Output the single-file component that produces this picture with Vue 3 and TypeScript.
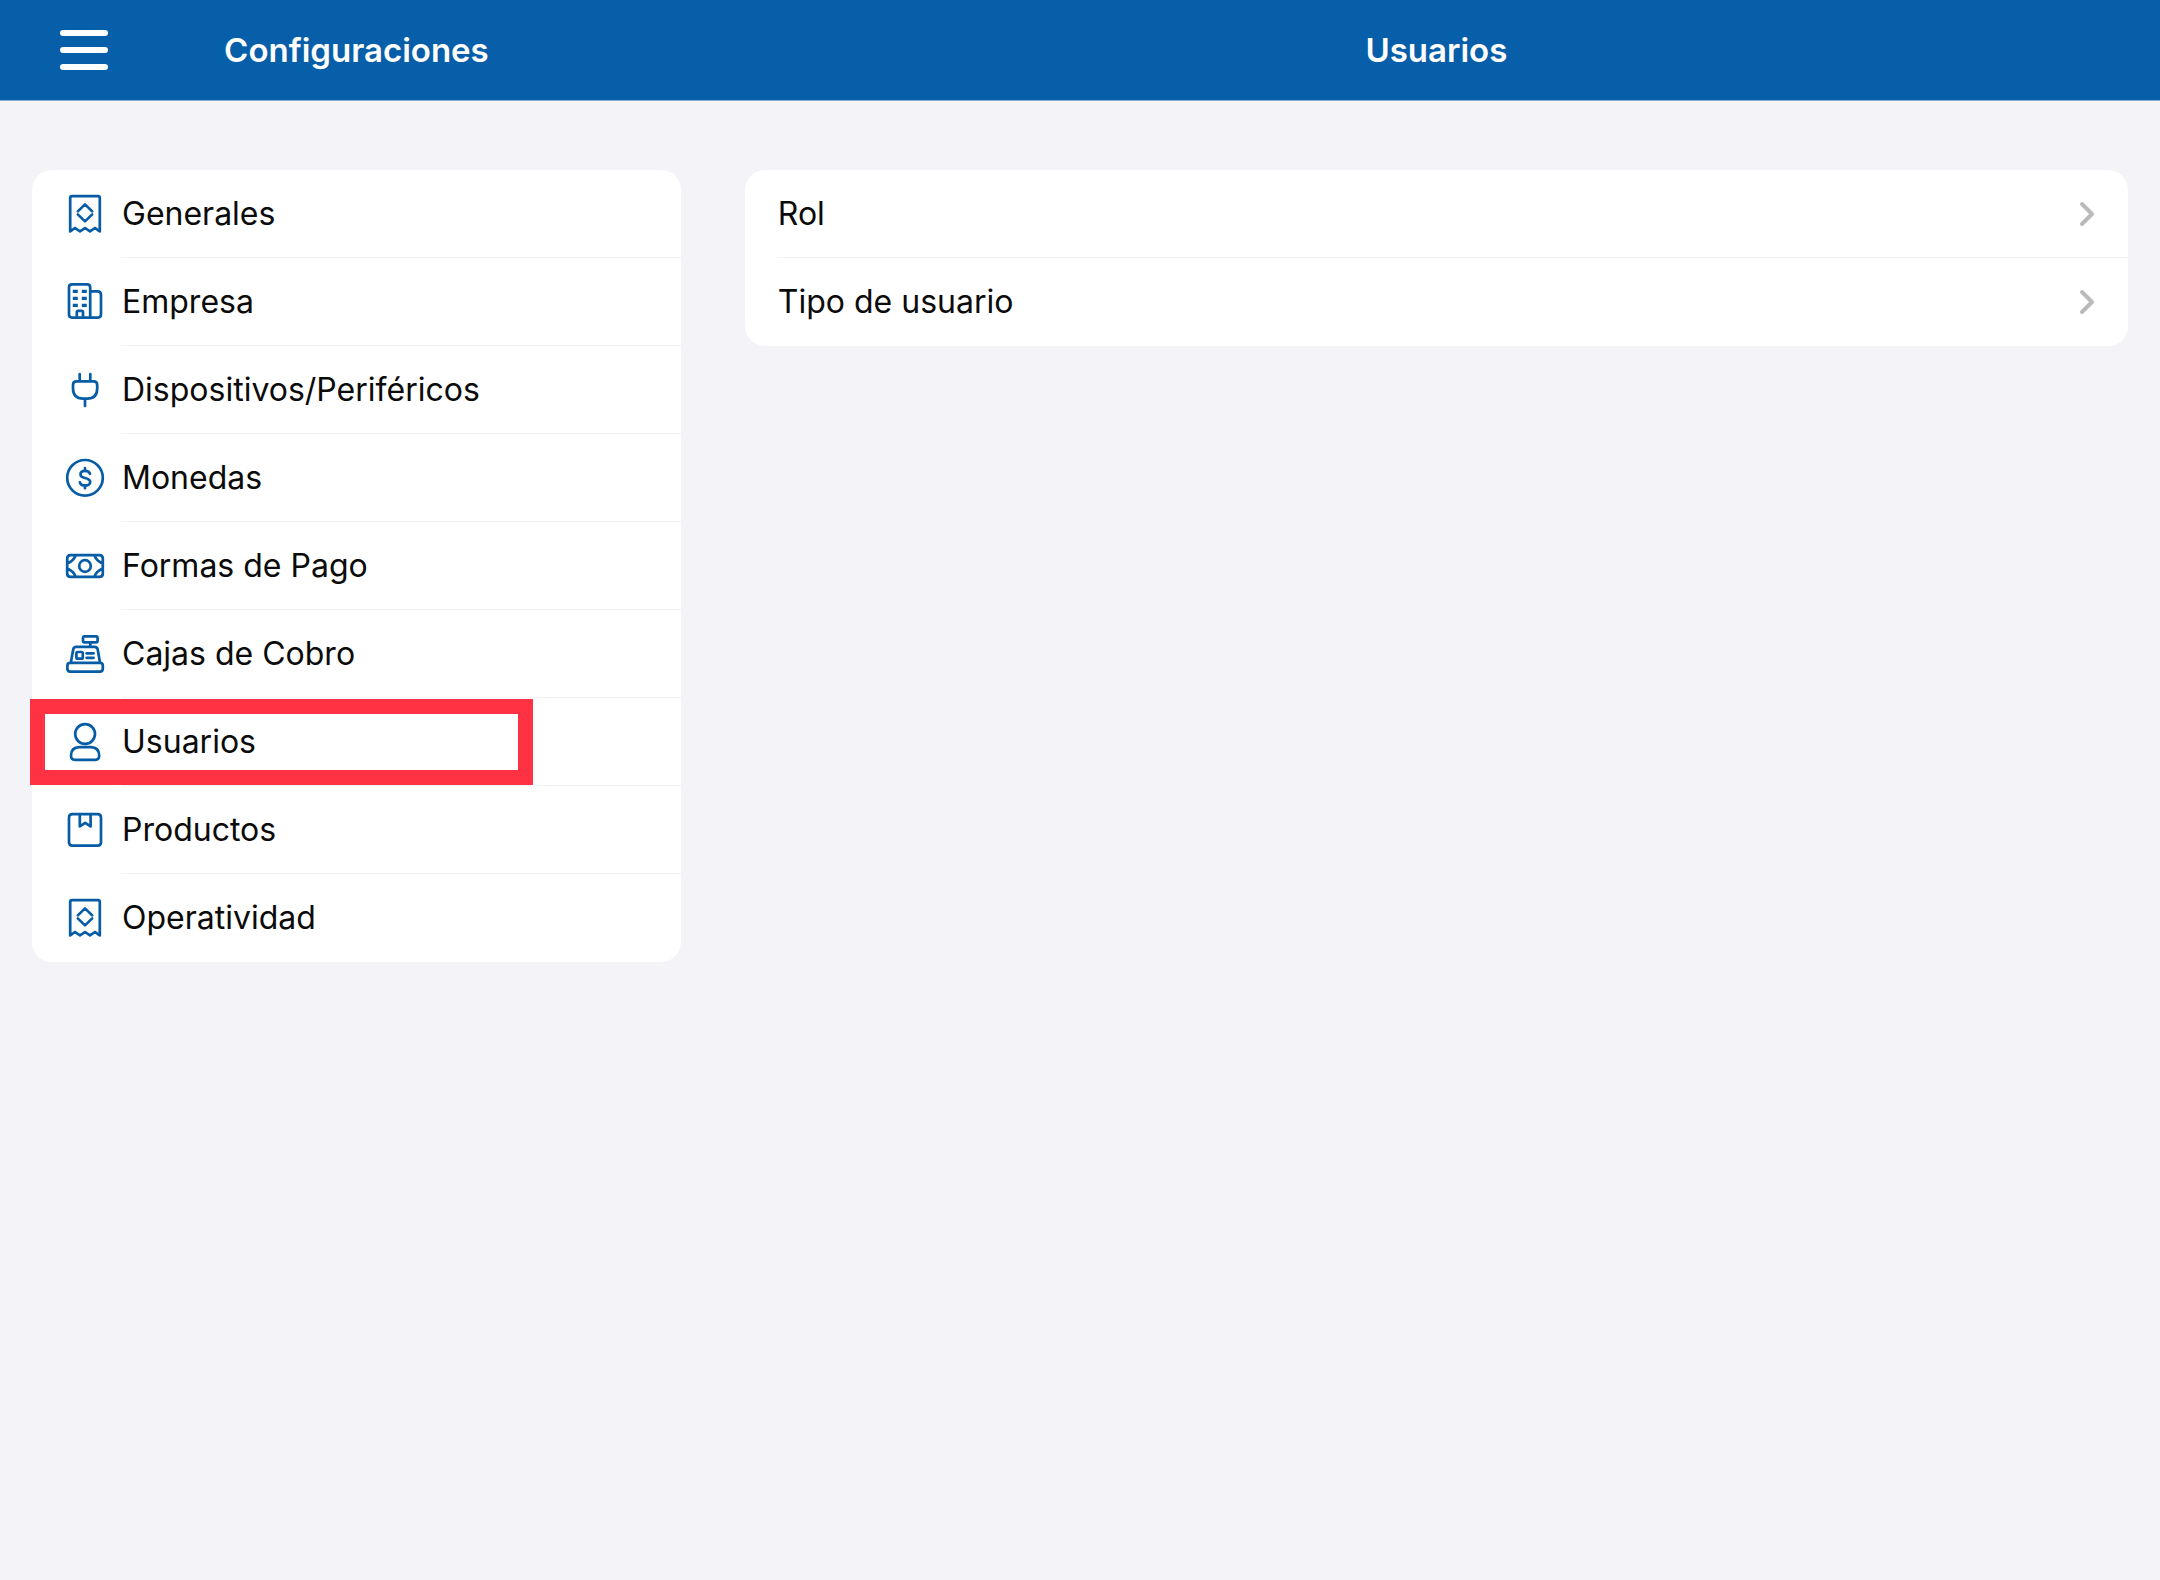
<script setup lang="ts">
import { ref } from 'vue'

interface Icon {
  stroke: string
  fill?: string
}

interface Section {
  id: string
  label: string
  icon: Icon
}

const receipt: Icon = {
  stroke:
    'M5.2 37.4V4q0-1.8 1.8-1.8H33q1.8 0 1.8 1.8V37.4L30 34L25 37.4L20 34L15 37.4L10 34ZM12.8 17.4L20 10.4L27.2 17.4M12.8 20.4L20 27.4L27.2 20.4',
}

const sections: Section[] = [
  { id: 'generales', label: 'Generales', icon: receipt },
  {
    id: 'empresa',
    label: 'Empresa',
    icon: {
      stroke:
        'M7 2.4H22.2Q25.2 2.4 25.2 5.4V35.6H7Q4 35.6 4 32.6V5.4Q4 2.4 7 2.4ZM25.2 9.4H32.6Q36 9.4 36 12.8V32.6Q36 35.6 33 35.6H25.2M11.8 35.6V30.2Q11.8 28.8 13.2 28.8H16.6Q18 28.8 18 30.2V35.6',
      fill: 'M7.8 7.7h5v3.4h-5zM16.8 7.7h5v3.4h-5zM7.8 14.7h5v3.4h-5zM16.8 14.7h5v3.4h-5zM7.8 21.7h5v3.4h-5zM16.8 21.7h5v3.4h-5z',
    },
  },
  {
    id: 'dispositivos',
    label: 'Dispositivos/Periféricos',
    icon: {
      stroke:
        'M14.7 4.2V11M25.3 4.2V11M11.6 11.4H28.6Q32.2 11.4 32.2 15V18.4Q32.2 28.6 22 28.6H18.2Q8 28.6 8 18.4V15Q8 11.4 11.6 11.4ZM20 28.6V36',
    },
  },
  {
    id: 'monedas',
    label: 'Monedas',
    icon: {
      stroke:
        'M37.8 19.8A17.8 17.8 0 1 1 2.2 19.8A17.8 17.8 0 1 1 37.8 19.8ZM20 10.2V13M20 27.4V30.2M25 15.8C24.4 14 22.6 12.8 20.1 12.8C17.4 12.8 15.5 14.2 15.5 16.4C15.5 18.8 17.5 19.4 20.1 20C23 20.7 25.2 21.4 25.2 24C25.2 26.2 23 27.6 20.1 27.6C17.4 27.6 15.4 26.4 14.9 24.4',
    },
  },
  {
    id: 'formas-pago',
    label: 'Formas de Pago',
    icon: {
      stroke:
        'M5.6 9.2H34.4Q37.8 9.2 37.8 12.6V27.4Q37.8 30.8 34.4 30.8H5.6Q2.2 30.8 2.2 27.4V12.6Q2.2 9.2 5.6 9.2ZM25.8 20A5.8 5.8 0 1 1 14.2 20A5.8 5.8 0 1 1 25.8 20ZM10.6 9.4Q8.6 14.6 2.4 17.4M29.4 9.4Q31.4 14.6 37.6 17.4M10.6 30.6Q8.6 25.4 2.4 22.6M29.4 30.6Q31.4 25.4 37.6 22.6',
    },
  },
  {
    id: 'cajas',
    label: 'Cajas de Cobro',
    icon: {
      stroke:
        'M19.6 2.4H31Q32.6 2.4 32.6 4V6.8Q32.6 8.4 31 8.4H19.6Q18 8.4 18 6.8V4Q18 2.4 19.6 2.4ZM25.3 8.4V12.8M5.8 28.8L8.2 15.4Q8.7 12.8 11.3 12.8H29.6Q32.2 12.8 32.7 15.4L35 28.8M5.2 28.8H35Q37.8 28.8 37.8 31.6V34.8Q37.8 37.6 35 37.6H5.2Q2.4 37.6 2.4 34.8V31.6Q2.4 28.8 5.2 28.8ZM12.6 18H16.6Q17.8 18 17.8 19.2V23.4Q17.8 24.6 16.6 24.6H12.6Q11.4 24.6 11.4 23.4V19.2Q11.4 18 12.6 18ZM21.6 19.3H28.6M21.6 23.8H28.6',
    },
  },
  {
    id: 'usuarios',
    label: 'Usuarios',
    icon: {
      stroke:
        'M30 12A9.9 9.9 0 1 1 10.2 12A9.9 9.9 0 1 1 30 12ZM14.4 25.2H25.8Q34.2 25.4 34.2 33.8Q34.2 37.8 30.2 37.8H10Q6 37.8 6 33.8Q6 25.4 14.4 25.2Z',
    },
  },
  {
    id: 'productos',
    label: 'Productos',
    icon: {
      stroke:
        'M7.4 4.2H32.6Q36 4.2 36 7.6V32.2Q36 35.6 32.6 35.6H7.4Q4 35.6 4 32.2V7.6Q4 4.2 7.4 4.2ZM14.8 4.2V16.4L20.2 12.8L25.6 16.4V4.2',
    },
  },
  { id: 'operatividad', label: 'Operatividad', icon: receipt },
]

const options: string[] = ['Rol', 'Tipo de usuario']

const active = ref('usuarios')
</script>

<template>
  <div class="page">
    <header class="bar">
      <div class="bar-side">
        <button class="menu" type="button" aria-label="Menú">
          <span></span>
          <span></span>
          <span></span>
        </button>
        <h1 class="title">Configuraciones</h1>
      </div>
      <h2 class="title">Usuarios</h2>
    </header>

    <div class="columns">
      <nav class="pane">
        <ul class="card">
          <li v-for="section in sections" :key="section.id">
            <button
              class="row section"
              :class="{ active: section.id === active }"
              type="button"
              @click="active = section.id"
            >
              <svg class="icon" viewBox="0 0 40 40" aria-hidden="true">
                <path class="line" :d="section.icon.stroke" />
                <path v-if="section.icon.fill" class="solid" :d="section.icon.fill" />
              </svg>
              <span class="label">{{ section.label }}</span>
            </button>
          </li>
        </ul>
      </nav>

      <main class="pane">
        <ul class="card">
          <li v-for="option in options" :key="option">
            <button class="row" type="button">
              <span class="label">{{ option }}</span>
              <svg class="chevron" viewBox="0 0 16 26" aria-hidden="true">
                <path d="M3 3L13 13L3 23" />
              </svg>
            </button>
          </li>
        </ul>
      </main>
    </div>
  </div>
</template>

<style>
body {
  margin: 0;
  background: #f3f3f8;
}
</style>

<style scoped>
.page {
  min-height: 100vh;
  background: #f3f3f8;
  color: #0b0b0b;
  font-family: Inter, "Liberation Sans", sans-serif;
  font-size: 32px;
  line-height: 40px;
}

.bar,
.columns {
  display: grid;
  grid-template-columns: 33% 67%;
}

.bar {
  height: 100px;
  align-items: center;
  border-bottom: 1px solid #86add0;
  background: #075ea9;
  color: #fff;
}

.bar-side {
  display: grid;
  grid-template-columns: 168px 1fr 168px;
  align-items: center;
}

.title {
  margin: 0;
  font-size: 33px;
  font-weight: 600;
  text-align: center;
}

.menu {
  display: flex;
  flex-direction: column;
  justify-content: space-between;
  width: 48px;
  height: 40px;
  margin: 0 0 0 60px;
  padding: 0;
  border: 0;
  background: none;
  cursor: pointer;
}

.menu span {
  height: 6px;
  border-radius: 3px;
  background: #fff;
}

.pane {
  padding: 69px 32px 32px;
}

.card {
  margin: 0;
  padding: 0;
  list-style: none;
  border-radius: 20px;
  background: #fff;
}

.row {
  position: relative;
  display: flex;
  align-items: center;
  gap: 17px;
  width: 100%;
  height: 88px;
  padding: 0 33px;
  border: 0;
  background: none;
  color: inherit;
  font: inherit;
  text-align: left;
  cursor: pointer;
}

li + li .row::before {
  content: "";
  position: absolute;
  top: -1px;
  right: 0;
  left: 32px;
  height: 1px;
  background: #f3f3f5;
}

li + li .section::before {
  left: 90px;
}

.active::after {
  content: "";
  position: absolute;
  top: 1px;
  bottom: 1px;
  left: -2px;
  box-sizing: border-box;
  width: 503px;
  border: 15px solid #ff3243;
}

.icon {
  flex: none;
  width: 40px;
  height: 40px;
}

.line {
  fill: none;
  stroke: #075ca6;
  stroke-width: 2.7;
  stroke-linecap: round;
  stroke-linejoin: round;
}

.solid {
  fill: #075ca6;
}

.label {
  flex: 1;
}

.chevron {
  flex: none;
  width: 16px;
  height: 26px;
}

.chevron path {
  fill: none;
  stroke: #bababa;
  stroke-width: 4;
  stroke-linecap: round;
  stroke-linejoin: round;
}
</style>
